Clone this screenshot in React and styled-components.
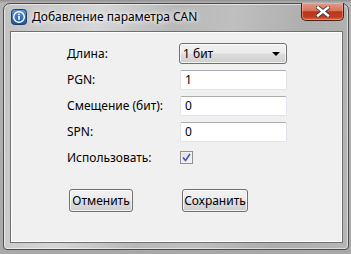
import React from 'react';
import styled, { createGlobalStyle } from 'styled-components';

const Global = createGlobalStyle`
    html, body {
        margin: 0;
        padding: 0;
        width: 351px;
        height: 254px;
        overflow: hidden;
        background: #a9a9a9;
        font-family: "Noto Sans", "Open Sans", "Liberation Sans", sans-serif;
    }
`;

const Desktop = styled.div`
    width: 351px;
    height: 254px;
    box-sizing: border-box;
    padding: 3px 2px 4px 3px;
    background: linear-gradient(to bottom, #8f8f8f 0, #b4b4b4 3px, #a8a8a8 100%);
`;

const Window = styled.div`
    height: 100%;
    box-sizing: border-box;
    border: 1px solid #4c4c4c;
    border-radius: 7px 7px 4px 4px;
    box-shadow: inset 0 0 0 1px rgba(255, 255, 255, 0.55);
    background: linear-gradient(100deg, #c2c2c2 0%, #d6d6d6 25%, #b8b8b8 45%, #bfbfbf 60%, #adadad 80%, #b6b6b6 100%);
    display: flex;
    flex-direction: column;
    padding: 0 5px 6px 6px;
`;

const TitleBar = styled.div`
    height: 27px;
    display: flex;
    align-items: flex-start;
    position: relative;
`;

const TitleIcon = styled.svg`
    width: 16px;
    height: 16px;
    margin: 5px 5px 0 1px;
    flex: none;
`;

const TitleText = styled.span`
    font-size: 12px;
    line-height: 16px;
    margin-top: 5px;
    color: #000;
    text-shadow: 0 0 6px #fff, 0 0 4px #fff;
`;

const CloseButton = styled.div`
    position: absolute;
    right: -1px;
    top: -1px;
    width: 43px;
    height: 18px;
    box-sizing: border-box;
    border: 1px solid #4e1f16;
    border-top: none;
    border-radius: 0 0 5px 5px;
    background: linear-gradient(to bottom, #e39a88 0%, #d6735c 45%, #bb3419 52%, #c03c20 80%, #d8663f 100%);
    box-shadow: inset 0 0 0 1px rgba(255, 200, 185, 0.45);
    display: flex;
    align-items: center;
    justify-content: center;
`;

const Client = styled.div`
    flex: 1;
    border: 1px solid #6f6f6f;
    background: #f0f0f0;
    box-shadow: inset 0 0 0 1px #ffffff;
    padding: 11px 0 0 56px;
`;

const Form = styled.div`
    display: grid;
    grid-template-columns: 112px 108px;
    grid-auto-rows: 21px;
    row-gap: 5px;
    align-items: center;
`;

const Label = styled.span`
    font-size: 12px;
    color: #000;
`;

const Combo = styled.div`
    height: 21px;
    box-sizing: border-box;
    border: 1px solid #707070;
    border-radius: 3px;
    background: linear-gradient(to bottom, #f2f2f2 0%, #ebebeb 48%, #dddddd 52%, #cfcfcf 100%);
    box-shadow: inset 0 0 0 1px rgba(255, 255, 255, 0.7);
    display: flex;
    align-items: center;
    justify-content: space-between;
    padding: 0 6px 0 3px;
    font-size: 12px;
    color: #000;
`;

const Arrow = styled.span`
    width: 0;
    height: 0;
    border-left: 4px solid transparent;
    border-right: 4px solid transparent;
    border-top: 4px solid #000;
`;

const Field = styled.div`
    height: 20px;
    margin-left: 1px;
    box-sizing: border-box;
    border: 1px solid #e2e3ea;
    border-top-color: #abadb3;
    border-radius: 2px;
    background: #fff;
    display: flex;
    align-items: center;
    padding-left: 4px;
    font-size: 12px;
    color: #000;
`;

const Check = styled.div`
    width: 13px;
    height: 13px;
    margin-left: 1px;
    box-sizing: border-box;
    border: 1px solid #8e8f8f;
    background: linear-gradient(135deg, #dcdcdc 0%, #f6f6f6 100%);
    box-shadow: inset 0 0 0 1px #f4f4f4;
    display: flex;
    align-items: center;
    justify-content: center;
`;

const Buttons = styled.div`
    display: flex;
    gap: 49px;
    margin: 21px 0 0 2px;
`;

const Button = styled.button`
    height: 23px;
    width: ${p => p.w}px;
    box-sizing: border-box;
    border: 1px solid #707070;
    border-radius: 3px;
    background: linear-gradient(to bottom, #f2f2f2 0%, #ebebeb 48%, #dddddd 52%, #cfcfcf 100%);
    box-shadow: inset 0 0 0 1px rgba(255, 255, 255, 0.7);
    font-family: inherit;
    font-size: 12px;
    color: #000;
    padding: 0;
`;

const App = () => {
    return (
        <Desktop>
            <Global />
            <Window>
                <TitleBar>
                    <TitleIcon viewBox="0 0 16 16">
                        <defs>
                            <linearGradient id="ig" x1="0" y1="0" x2="0" y2="1">
                                <stop offset="0" stopColor="#5f97d2" />
                                <stop offset="1" stopColor="#1e5393" />
                            </linearGradient>
                        </defs>
                        <rect x="0.5" y="0.5" width="15" height="15" rx="3" fill="url(#ig)" stroke="#1b3f6e" />
                        <circle cx="8" cy="8" r="5.3" fill="none" stroke="#fff" strokeWidth="1.4" />
                        <rect x="7.2" y="7" width="1.6" height="3.8" fill="#fff" />
                        <rect x="7.2" y="4.7" width="1.6" height="1.5" fill="#fff" />
                    </TitleIcon>
                    <TitleText>Добавление параметра CAN</TitleText>
                    <CloseButton>
                        <svg width="14" height="11" viewBox="0 0 14 11">
                            <path d="M2 1.5 L12 9.5 M12 1.5 L2 9.5" stroke="#3a3a3a" strokeWidth="4.2" strokeLinecap="square" />
                            <path d="M2 1.5 L12 9.5 M12 1.5 L2 9.5" stroke="#ffffff" strokeWidth="2.4" strokeLinecap="square" />
                        </svg>
                    </CloseButton>
                </TitleBar>
                <Client>
                    <Form>
                        <Label>Длина:</Label>
                        <Combo>
                            <span>1 бит</span>
                            <Arrow />
                        </Combo>
                        <Label>PGN:</Label>
                        <Field>1</Field>
                        <Label>Смещение (бит):</Label>
                        <Field>0</Field>
                        <Label>SPN:</Label>
                        <Field>0</Field>
                        <Label>Использовать:</Label>
                        <Check>
                            <svg width="9" height="9" viewBox="0 0 9 9">
                                <path d="M1 4.5 L3.5 7.5 L8 1" fill="none" stroke="#4258b0" strokeWidth="1.6" />
                            </svg>
                        </Check>
                    </Form>
                    <Buttons>
                        <Button w={64}>Отменить</Button>
                        <Button w={66}>Сохранить</Button>
                    </Buttons>
                </Client>
            </Window>
        </Desktop>
    );
}

export default App;
